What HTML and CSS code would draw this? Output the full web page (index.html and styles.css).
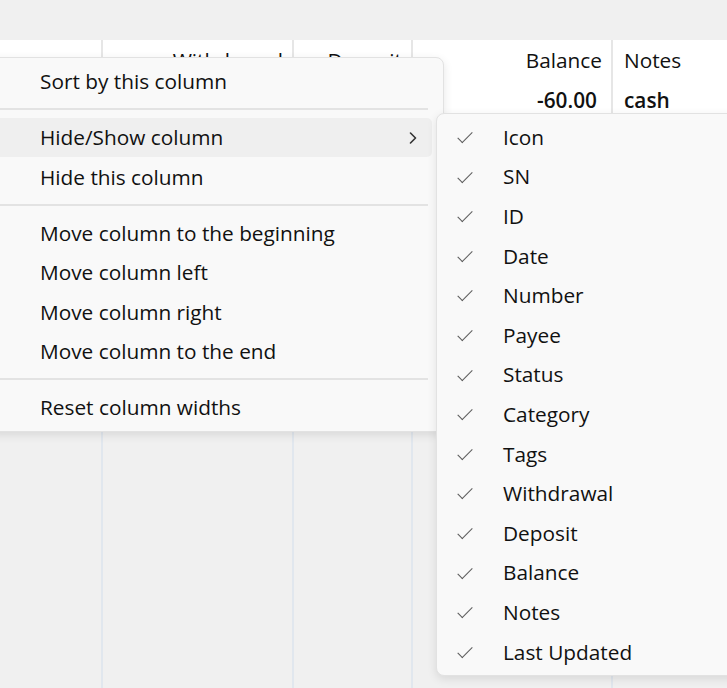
FILE: index.html
```html
<!DOCTYPE html>
<html lang="en">
<head>
    <meta charset="UTF-8">
    <meta name="viewport" content="width=device-width, initial-scale=1.0">
    <title>Transactions</title>
    <link rel="stylesheet" href="styles.css">
</head>
<body>

<div class="toolbar"></div>

<div class="ledger">
    <div class="row head">
        <div class="cell c1"></div>
        <div class="cell c2 num">Withdrawal</div>
        <div class="cell c3 num">Deposit</div>
        <div class="cell c4 num">Balance</div>
        <div class="cell c5">Notes</div>
    </div>
    <div class="row data">
        <div class="cell c1"></div>
        <div class="cell c2 num"></div>
        <div class="cell c3 num"></div>
        <div class="cell c4 num">-60.00</div>
        <div class="cell c5">cash</div>
    </div>
    <div class="row filler">
        <div class="cell c1"></div>
        <div class="cell c2"></div>
        <div class="cell c3"></div>
        <div class="cell c4"></div>
        <div class="cell c5"></div>
    </div>
</div>

<!-- column header context menu -->
<div class="menu main-menu">
    <div class="item">Sort by this column</div>
    <div class="sep wide"></div>
    <div class="item active">Hide/Show column
        <svg class="chevron" width="8" height="12" viewBox="0 0 8 12">
            <path d="M1.5 1 L6.5 6 L1.5 11" fill="none" stroke="#333" stroke-width="1.6" stroke-linecap="round" stroke-linejoin="round"/>
        </svg>
    </div>
    <div class="item">Hide this column</div>
    <div class="sep"></div>
    <div class="item">Move column to the beginning</div>
    <div class="item">Move column left</div>
    <div class="item">Move column right</div>
    <div class="item">Move column to the end</div>
    <div class="sep"></div>
    <div class="item">Reset column widths</div>
</div>

<div class="menu sub-menu">
    <div class="item"><span class="tick"></span>Icon</div>
    <div class="item"><span class="tick"></span>SN</div>
    <div class="item"><span class="tick"></span>ID</div>
    <div class="item"><span class="tick"></span>Date</div>
    <div class="item"><span class="tick"></span>Number</div>
    <div class="item"><span class="tick"></span>Payee</div>
    <div class="item"><span class="tick"></span>Status</div>
    <div class="item"><span class="tick"></span>Category</div>
    <div class="item"><span class="tick"></span>Tags</div>
    <div class="item"><span class="tick"></span>Withdrawal</div>
    <div class="item"><span class="tick"></span>Deposit</div>
    <div class="item"><span class="tick"></span>Balance</div>
    <div class="item"><span class="tick"></span>Notes</div>
    <div class="item"><span class="tick"></span>Last Updated</div>
</div>

</body>
</html>
```

FILE: styles.css
```css
body {
    font-family: "Open Sans", "Noto Sans", sans-serif;
    font-size: 20.8px;
    color: #111;
    margin: 0;
    height: 688px;
    overflow: hidden;
    background-color: #f0f0f0;
    display: flex;
    flex-direction: column;
}

.toolbar {
    height: 40px;
    background-color: #f0f0f0;
}

.ledger {
    flex: 1;
    display: flex;
    flex-direction: column;
}

.row {
    display: grid;
    grid-template-columns: 103px 191px 119px 200px 1fr;
    height: 40px;
    background-color: white;
}

.cell {
    border-right: 2px solid #e6e6e6;
    padding: 0 10px 0 11px;
    display: flex;
    align-items: center;
    white-space: nowrap;
    overflow: hidden;
}

.cell.num {
    justify-content: flex-end;
    padding-right: 9px;
}

.c5 {
    border-right: none;
}

.data .cell {
    font-weight: 600;
}

.data .cell.num {
    padding-right: 14px;
}

.row.filler {
    flex: 1;
    background-color: #f0f0f0;
}

.filler .cell {
    border-right-color: #e1e7ee;
}

/* popup menus */
.menu {
    position: absolute;
    background-color: #f9f9f9;
    border: 1px solid #e2e2e2;
    border-radius: 8px;
    box-shadow: 0 3px 10px rgba(0, 0, 0, 0.10);
    padding: 3px 0 4px;
}

.main-menu {
    left: -12px;
    top: 57px;
    width: 454px;
}

.sub-menu {
    left: 436px;
    top: 113px;
    width: 320px;
}

.item {
    height: 39.6px;
    display: flex;
    align-items: center;
    padding-left: 47px;
    margin: 0 4px;
    border-radius: 5px;
    position: relative;
}

.main-menu .item {
    margin-right: 11px;
}

.item.active {
    background-color: #efefef;
}

.chevron {
    position: absolute;
    right: 15px;
    top: 14px;
}

.sep {
    height: 2px;
    background-color: #e3e3e3;
    margin: 7px 15px 7px 0;
}

.sep.wide {
    margin-bottom: 8px;
}

.sub-menu .item {
    padding-left: 62px;
}

.tick {
    position: absolute;
    left: 17px;
    top: 15px;
    width: 13px;
    height: 6px;
    border-left: 1.6px solid #5c5c5c;
    border-bottom: 1.6px solid #5c5c5c;
    transform: rotate(-45deg) scaleX(1.05);
    transform-origin: center;
}
```
